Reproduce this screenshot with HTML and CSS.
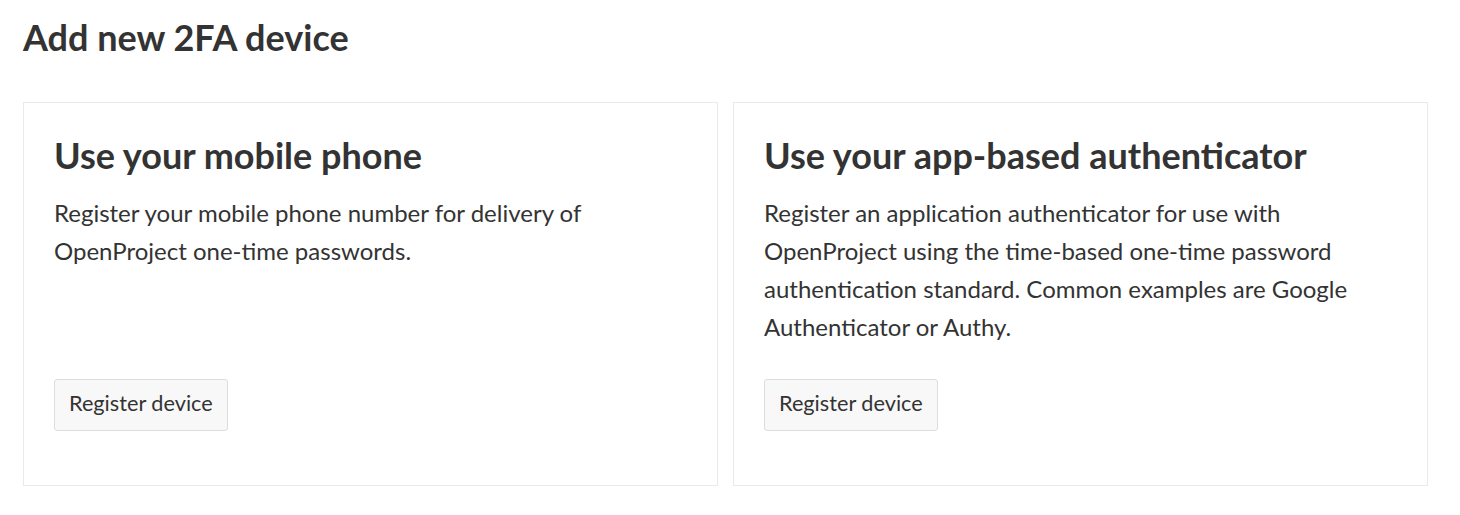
FILE: index.html
```html
<!DOCTYPE html>
<html lang="en">
<head>
<meta charset="utf-8">
<title>Add new 2FA device</title>
<link rel="stylesheet" href="styles.css">
</head>
<body>
<main class="page">
  <h1 class="page-title">Add new 2FA device</h1>
  <div class="cards">
    <section class="card">
      <h2 class="card-title">Use your mobile phone</h2>
      <p class="card-text">Register your mobile phone number for delivery of OpenProject one-time passwords.</p>
      <div class="card-actions"><button class="button" type="button">Register device</button></div>
    </section>
    <section class="card">
      <h2 class="card-title">Use your app-based authenticator</h2>
      <p class="card-text">Register an application authenticator for use with OpenProject using the time-based one-time password authentication standard. Common examples are Google Authenticator or Authy.</p>
      <div class="card-actions"><button class="button" type="button">Register device</button></div>
    </section>
  </div>
</main>
</body>
</html>
```
FILE: styles.css
```css
* { box-sizing: border-box; }
html, body { margin: 0; padding: 0; background: #fff; }
body {
  font-family: Lato, "Noto Sans", sans-serif;
  color: #333;
}
.page {
  padding: 13px 32px 0 23px;
}
.page-title {
  margin: 0;
  font-size: 36px;
  font-weight: 700;
  line-height: 48px;
  color: #333;
}
.cards {
  margin-top: 41px;
  display: grid;
  grid-template-columns: 695px 695px;
  gap: 15px;
}
.card {
  border: 1px solid #eaeaea;
  padding: 28px 30px 54px;
  display: flex;
  flex-direction: column;
}
.card-title {
  margin: 0;
  font-size: 36px;
  font-weight: 700;
  line-height: 48px;
  color: #333;
}
.card-text {
  margin: 15px 0 0;
  font-size: 24px;
  line-height: 38px;
  color: #333;
}
.card-actions {
  margin-top: auto;
  padding-top: 33px;
}
.button {
  font-family: Lato, "Noto Sans", sans-serif;
  font-size: 21.7px;
  color: #333;
  background: #f8f8f8;
  border: 1px solid #dddddd;
  border-radius: 3px;
  height: 52px;
  padding: 0 14px 4px;
}
```
